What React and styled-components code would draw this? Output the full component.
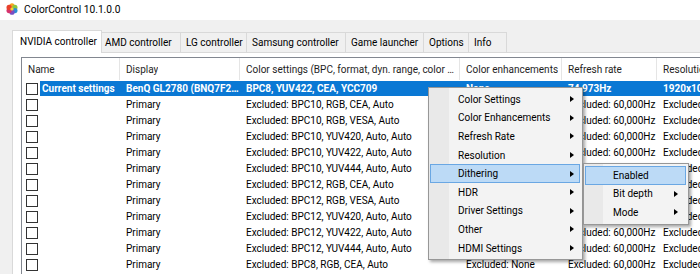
import styled, { createGlobalStyle } from "styled-components";

const GlobalStyle = createGlobalStyle`
  html, body {
    margin: 0;
    padding: 0;
  }
  body {
    font-family: Roboto, "Noto Sans", "Liberation Sans", sans-serif;
    font-size: 10px;
    color: #000;
    background: #f0f0f0;
  }
`;

const tabs = [
  { title: "NVIDIA controller", w: 86, active: true },
  { title: "AMD controller", w: 81 },
  { title: "LG controller", w: 66 },
  { title: "Samsung controller", w: 99 },
  { title: "Game launcher", w: 78 },
  { title: "Options", w: 45 },
  { title: "Info", w: 38 },
];

const columns = [
  { title: "Name", w: 98 },
  { title: "Display", w: 120 },
  { title: "Color settings (BPC, format, dyn. range, color space)", w: 220 },
  { title: "Color enhancements", w: 102 },
  { title: "Refresh rate", w: 95 },
  { title: "Resolution", w: 120 },
];

const excluded = [
  "BPC10, RGB, CEA, Auto",
  "BPC10, RGB, VESA, Auto",
  "BPC10, YUV420, Auto, Auto",
  "BPC10, YUV422, Auto, Auto",
  "BPC10, YUV444, Auto, Auto",
  "BPC12, RGB, CEA, Auto",
  "BPC12, RGB, VESA, Auto",
  "BPC12, YUV420, Auto, Auto",
  "BPC12, YUV422, Auto, Auto",
  "BPC12, YUV444, Auto, Auto",
  "BPC8, RGB, CEA, Auto",
];

const rows = [
  {
    selected: true,
    cells: [
      "Current settings",
      "BenQ GL2780 (BNQ7F2F)",
      "BPC8, YUV422, CEA, YCC709",
      "None",
      "74,973Hz",
      "1920x1080",
    ],
  },
  ...excluded.map((c) => ({
    cells: [
      "",
      "Primary",
      "Excluded: " + c,
      "Excluded: None",
      "Excluded: 60,000Hz",
      "Excluded: 1920x1080",
    ],
  })),
];

const menuItems = [
  "Color Settings",
  "Color Enhancements",
  "Refresh Rate",
  "Resolution",
  "Dithering",
  "HDR",
  "Driver Settings",
  "Other",
  "HDMI Settings",
];

const subItems = [
  { title: "Enabled", sub: false, active: true },
  { title: "Bit depth", sub: true },
  { title: "Mode", sub: true },
];

// ColorControl app icon: a small ring of coloured petals
const AppIcon = () => (
  <svg width="12" height="12" viewBox="0 0 12 12">
    <circle cx="6" cy="2.8" r="2.6" fill="#f5a623" />
    <circle cx="8.9" cy="4.4" r="2.6" fill="#8cc63f" />
    <circle cx="8.9" cy="7.6" r="2.6" fill="#2b8fd6" />
    <circle cx="6" cy="9.2" r="2.6" fill="#7a4fc4" />
    <circle cx="3.1" cy="7.6" r="2.6" fill="#d6336c" />
    <circle cx="3.1" cy="4.4" r="2.6" fill="#e8412c" />
    <circle cx="6" cy="6" r="1.6" fill="#f7d23a" />
  </svg>
);

const App = () => {
  return (
    <Window>
      <GlobalStyle />
      <TitleBar>
        <AppIcon />
        <span>ColorControl 10.1.0.0</span>
      </TitleBar>

      <Body>
        <TabStrip>
          {tabs.map((tab) => (
            <Tab key={tab.title} $w={tab.w} $active={tab.active}>
              {tab.title}
            </Tab>
          ))}
        </TabStrip>

        <TabPage>
          <ListView>
            <HeaderRow>
              {columns.map((col) => (
                <HeaderCell key={col.title} $w={col.w}>
                  <span>{col.title}</span>
                </HeaderCell>
              ))}
            </HeaderRow>

            {rows.map((row, index) => (
              <Row key={index}>
                <CheckWrap>
                  <CheckBox />
                </CheckWrap>
                <RowBody $selected={row.selected}>
                  {row.cells.map((text, i) => (
                    <Cell
                      key={i}
                      $w={i === 0 ? 80 : columns[i].w}
                      $first={i === 0}
                    >
                      {text}
                    </Cell>
                  ))}
                </RowBody>
              </Row>
            ))}
          </ListView>
        </TabPage>
      </Body>

      <Menu $left={428} $top={87} $w={155} $strip={20}>
        {menuItems.map((item) => (
          <MenuItem
            key={item}
            $active={item === "Dithering"}
            $indent={27}
            $right={5}
          >
            <span>{item}</span>
            <Arrow />
          </MenuItem>
        ))}
      </Menu>

      <Menu $left={583} $top={163} $w={106} $strip={19}>
        {subItems.map((item) => (
          <MenuItem
            key={item.title}
            $active={item.active}
            $indent={27}
            $right={7}
          >
            <span>{item.title}</span>
            {item.sub && <Arrow />}
          </MenuItem>
        ))}
      </Menu>
    </Window>
  );
};

const Window = styled.div`
  position: relative;
  width: 700px;
  height: 274px;
  overflow: hidden;
  background: #f0f0f0;
`;

const TitleBar = styled.div`
  display: flex;
  align-items: center;
  gap: 6px;
  height: 18px;
  padding: 0 0 2px 6px;
  background: #fff;
  color: #000;
  font-size: 10.2px;
`;

const Body = styled.div`
  padding: 10px 0 0 12px;
`;

const TabStrip = styled.div`
  display: flex;
  align-items: flex-end;
  height: 22px;
  padding-left: 2px;
  position: relative;
  z-index: 1;
`;

const Tab = styled.div`
  box-sizing: border-box;
  display: flex;
  align-items: center;
  width: ${(p) => p.$w + (p.$active ? 4 : 1)}px;
  height: ${(p) => (p.$active ? 23 : 20)}px;
  margin: ${(p) => (p.$active ? "0 -2px -1px -2px" : "0 0 0 -1px")};
  padding: ${(p) => (p.$active ? "0 0 1px 7px" : "0 0 0 5px")};
  background: ${(p) => (p.$active ? "#fff" : "#f0f0f0")};
  border: 1px solid #d9d9d9;
  border-bottom: none;
  white-space: nowrap;
  position: relative;
  z-index: ${(p) => (p.$active ? 2 : 1)};

  &:first-child {
    margin-left: -2px;
  }
`;

const TabPage = styled.div`
  height: 230px;
  padding: 4px 0 0 8px;
  background: #fff;
  border-top: 1px solid #d9d9d9;
  border-left: 1px solid #d9d9d9;
`;

const ListView = styled.div`
  height: 100%;
  border-top: 1px solid #828790;
  border-left: 1px solid #828790;
  background: #fff;
`;

const HeaderRow = styled.div`
  display: flex;
  height: 22px;
`;

const HeaderCell = styled.div`
  box-sizing: border-box;
  display: flex;
  align-items: center;
  flex: 0 0 ${(p) => p.$w}px;
  padding-left: 6px;
  border-right: 1px solid #e5e5e5;
  color: #1e1e1e;
  overflow: hidden;

  span {
    white-space: nowrap;
    overflow: hidden;
    text-overflow: ellipsis;
  }
`;

const Row = styled.div`
  display: flex;
  height: 16px;
`;

const CheckWrap = styled.div`
  flex: 0 0 18px;
  display: flex;
  align-items: center;
  padding: 1px 0 0 4px;
  box-sizing: border-box;
`;

const CheckBox = styled.div`
  width: 10px;
  height: 10px;
  border: 1px solid #333;
  background: #fff;
`;

const RowBody = styled.div`
  display: flex;
  align-items: center;
  height: 15px;
  margin-top: 1px;
  background: ${(p) => (p.$selected ? "#0a78d4" : "transparent")};
  color: ${(p) => (p.$selected ? "#fff" : "#000")};
  font-weight: ${(p) => (p.$selected ? 700 : 400)};
`;

const Cell = styled.div`
  box-sizing: border-box;
  flex: 0 0 ${(p) => p.$w}px;
  padding-left: ${(p) => (p.$first ? 2 : 6)}px;
  white-space: nowrap;
  overflow: hidden;
  text-overflow: ellipsis;
`;

const Menu = styled.div`
  position: absolute;
  left: ${(p) => p.$left}px;
  top: ${(p) => p.$top}px;
  width: ${(p) => p.$w}px;
  box-sizing: border-box;
  padding: 2px 2px 2px 1px;
  border: 1px solid #979797;
  background: linear-gradient(
    to right,
    #e9e9e9 0,
    #e9e9e9 ${(p) => p.$strip}px,
    #f3f3f3 ${(p) => p.$strip}px
  );
  box-shadow: 2px 2px 3px rgba(0, 0, 0, 0.35);
  z-index: 5;
`;

const MenuItem = styled.div`
  box-sizing: border-box;
  display: flex;
  align-items: center;
  justify-content: space-between;
  height: 18.6px;
  padding: 0 ${(p) => p.$right}px 0 ${(p) => p.$indent}px;
  border: 1px solid ${(p) => (p.$active ? "#6aa7e3" : "transparent")};
  background: ${(p) => (p.$active ? "#bcdaf6" : "transparent")};
  white-space: nowrap;
`;

const Arrow = styled.span`
  width: 0;
  height: 0;
  border-top: 3.5px solid transparent;
  border-bottom: 3.5px solid transparent;
  border-left: 4px solid #000;
`;

export default App;
